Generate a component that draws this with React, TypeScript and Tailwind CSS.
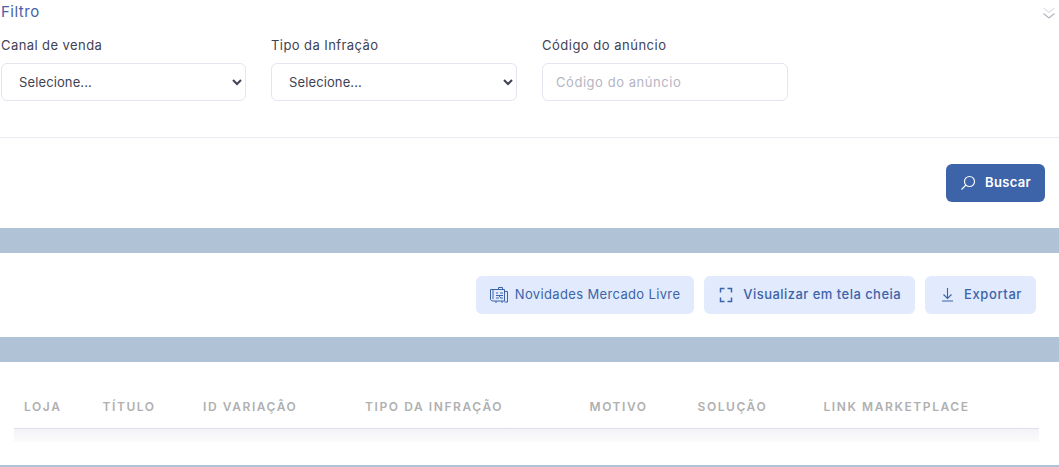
import React from 'react';

const fontStack = 'font-["Inter","Noto_Sans",sans-serif]';

const columns = [
  { label: 'LOJA', width: 'w-[78.5px]' },
  { label: 'TÍTULO', width: 'w-[100.5px]' },
  { label: 'ID VARIAÇÃO', width: 'w-[162px]' },
  { label: 'TIPO DA INFRAÇÃO', width: 'w-[224.5px]' },
  { label: 'MOTIVO', width: 'w-[108px]' },
  { label: 'SOLUÇÃO', width: 'w-[126px]' },
  { label: 'LINK MARKETPLACE', width: 'flex-1' },
];

const SelectField = ({ label, width }: { label: string; width: string }) => (
  <div className={`${width} flex flex-col`}>
    <label className="mb-[5px] h-[26px] text-[13px] leading-[26px] tracking-[0.42px] text-[#3f4254]">{label}</label>
    <select
      defaultValue=""
      className="h-[38px] w-full rounded-md border border-[#e4e6ef] bg-white pl-[13px] pr-[3px] text-[13px] tracking-[0.12px] text-[#3f4254] outline-none"
    >
      <option value="">Selecione...</option>
    </select>
  </div>
);

const NewsIcon = () => (
  <svg width="18" height="18" viewBox="0 0 18 18" fill="none" stroke="#3d64a8" strokeWidth="1">
    <path d="M.5 3.500h14v11.500H3c-1.400 0-2.500-.8-2.500-2z" />
    <path d="M3 3.500v9.500M14.500 5.500h3v10.500h-3" />
    <path d="M6 7h2M10 7h3M6 9.500h7M6 12h3M10.500 12h2.500M9 10l2 2" />
    <path d="M8.500 3.500V1.500h4v2M6 15v2M12 15v2" />
  </svg>
);

const FullscreenIcon = () => (
  <svg width="16" height="16" viewBox="0 0 16 16" fill="none" stroke="#3d64a8" strokeWidth="1.5">
    <path d="M2.500 5.500v-4h4M9.500 1.500h4v4M13.500 10.500v4h-4M6.500 14.500h-4v-4" />
  </svg>
);

const DownloadIcon = () => (
  <svg width="16" height="16" viewBox="0 0 16 16" fill="none" stroke="#3d64a8" strokeWidth="1.1">
    <path d="M8.500 1v10.500M4.500 7.500l4 4 4-4M3 14h11" />
  </svg>
);

const SearchIcon = () => (
  <svg width="16" height="16" viewBox="0 0 16 16" fill="none" stroke="#ffffff" strokeWidth="1.1">
    <circle cx="9.500" cy="6.500" r="5" />
    <path d="M6 10 1.500 14.500" />
  </svg>
);

const DoubleChevron = () => (
  <svg width="14" height="13" viewBox="0 0 14 13" fill="none" strokeWidth="1.2">
    <path d="M1.500 1 7 5.500 12.500 1" stroke="#e0e0e8" />
    <path d="M1.500 6.500 7 11l5.500-4.500" stroke="#b5b5c3" />
  </svg>
);

const ActionButton = ({ icon, label, tracking, medium, gap }: { icon: React.ReactNode; label: string; tracking: string; medium?: boolean; gap: string }) => (
  <button className={`flex h-[38px] items-center ${gap} ${tracking} rounded-md bg-[#e1ebfd] px-[14px] text-[13px] text-[#3d64a8] ${medium ? 'font-medium' : ''}`}>
    {icon}
    {label}
  </button>
);

export default function App() {
  return (
    <div className={`${fontStack} h-[467px] w-[1059px] overflow-hidden bg-white`}>
      {/* Filtro */}
      <div className="flex h-[23px] items-start justify-between pl-[1px] pr-[3px]">
        <span className="text-[15px] leading-[23px] tracking-[0.5px] text-[#4a60a8]">Filtro</span>
        <span className="mt-[7px]"><DoubleChevron /></span>
      </div>
      <div className="flex h-[114px] gap-[25px] pl-[1px] pt-[9px]">
        <SelectField label="Canal de venda" width="w-[245px]" />
        <SelectField label="Tipo da Infração" width="w-[246px]" />
        <div className="flex w-[246px] flex-col">
          <label className="mb-[5px] h-[26px] text-[13px] leading-[26px] tracking-[0.5px] text-[#3f4254]">Código do anúncio</label>
          <input
            placeholder="Código do anúncio"
            className="h-[38px] w-full rounded-md border border-[#e4e6ef] bg-white px-[13px] text-[13px] tracking-[0.55px] text-[#3f4254] outline-none placeholder:text-[#b5b5c3]"
          />
        </div>
      </div>
      <div className="h-px bg-[#ebedf3]" />

      <div className="flex h-[90px] justify-end pr-[14px] pt-[26px]">
        <button className="flex h-[38px] w-[99px] items-center justify-center gap-[9px] rounded-md bg-[#3d64a8] text-[13px] font-semibold tracking-[0.3px] text-white">
          <SearchIcon />
          Buscar
        </button>
      </div>

      <div className="h-[25px] bg-[#afc2d6]" />

      <div className="flex h-[84px] justify-end gap-[10px] pr-[23px] pt-[23px]">
        <ActionButton icon={<NewsIcon />} label="Novidades Mercado Livre" tracking="tracking-[0.35px]" gap="gap-[7px]" />
        <ActionButton icon={<FullscreenIcon />} label="Visualizar em tela cheia" tracking="tracking-[0.46px]" medium gap="gap-[9px]" />
        <ActionButton icon={<DownloadIcon />} label="Exportar" tracking="tracking-[0.6px]" medium gap="gap-[9px]" />
      </div>

      <div className="h-[25px] bg-[#afc2d6]" />

      {/* Tabela */}
      <div className="ml-[14px] mr-[20px] mt-[26px]">
        <div className="flex h-[41px] items-center border-b border-[#dfdff0] pb-[2px] pl-[10px]">
          {columns.map((col) => (
            <span key={col.label} className={`${col.width} whitespace-nowrap text-[12px] font-semibold tracking-[1.58px] text-[#b0b0b0]`}>
              {col.label}
            </span>
          ))}
        </div>
        <div className="h-[13px] bg-gradient-to-b from-[#f4f4f7] to-[#fbfbfc]" />
      </div>

      <div className="mt-[23px] h-[2px] bg-[#afc2d6]" />
    </div>
  );
}
